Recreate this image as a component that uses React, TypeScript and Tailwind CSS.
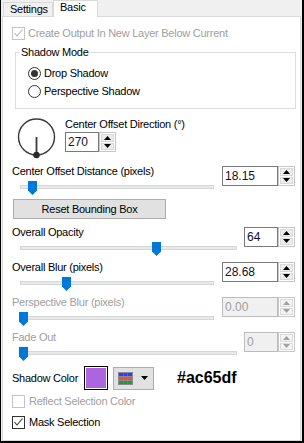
import React from "react";

const T = "text-[11px] leading-[13px] tracking-[-0.25px] whitespace-nowrap";

function Check({ checked, disabled }: { checked?: boolean; disabled?: boolean }) {
  const c = disabled ? "#b5b5b5" : "#333333";
  return (
    <div
      className={`w-[13px] h-[13px] bg-white border shrink-0 ${disabled ? "border-[#c4c4c4]" : "border-[#333333]"}`}
    >
      {checked && (
        <svg width="11" height="11" viewBox="0 0 11 11">
          <polyline points="1.5,5 4,8 9.5,1.5" fill="none" stroke={c} strokeWidth="1.1" />
        </svg>
      )}
    </div>
  );
}

function Radio({ on }: { on?: boolean }) {
  return (
    <div className="w-[13px] h-[13px] rounded-full border border-[#333333] bg-white flex items-center justify-center shrink-0">
      {on && <div className="w-[7px] h-[7px] rounded-full bg-[#333333]" />}
    </div>
  );
}

function Arrow({ up, disabled }: { up?: boolean; disabled?: boolean }) {
  const c = disabled ? "#a0a0a0" : "#000";
  return (
    <svg width="7" height="4" viewBox="0 0 7 4">
      {up ? <polygon points="0,4 7,4 3.5,0" fill={c} /> : <polygon points="0,0 7,0 3.5,4" fill={c} />}
    </svg>
  );
}

function Spin({ value, w, disabled }: { value: string; w: string; disabled?: boolean }) {
  return (
    <div className={`flex h-[20px] ${w} shrink-0`}>
      <div
        className={`flex-1 border flex items-center pl-[2px] text-[12px] leading-[14px] ${
          disabled ? "border-[#bcbcbc] bg-[#f0f0f0] text-[#a0a0a0]" : "border-[#7a7a7a] bg-white text-[#101030]"
        }`}
      >
        {value}
      </div>
      <div className="w-[17px] flex flex-col border border-[#c6c6c6] bg-white p-[1px] gap-[1px]">
        <div className={`flex-1 flex items-center justify-center ${disabled ? "bg-[#f4f4f4]" : "bg-[#ececec]"} border border-[#dadada]`}>
          <Arrow up disabled={disabled} />
        </div>
        <div className={`flex-1 flex items-center justify-center ${disabled ? "bg-[#f4f4f4]" : "bg-[#ececec]"} border border-[#dadada]`}>
          <Arrow disabled={disabled} />
        </div>
      </div>
    </div>
  );
}

function Slider({ w, pos }: { w: string; pos: number }) {
  return (
    <div className={`relative h-[16px] ml-[8px] ${w}`}>
      <div className="absolute left-0 right-0 top-[7px] h-[4px] bg-[#e7eaea] border border-[#d6d6d6]" />
      <svg className="absolute top-[3px]" style={{ left: pos }} width="9" height="14" viewBox="0 0 9 14">
        <path d="M0 0 H9 V9.5 L4.5 14 L0 9.5 Z" fill="#0078d7" />
      </svg>
    </div>
  );
}

function Section({
  label,
  value,
  wide,
  pos,
  disabled,
  h,
}: {
  label: string;
  value: string;
  wide: boolean;
  pos: number;
  disabled?: boolean;
  h: string;
}) {
  return (
    <div className={`flex justify-between items-start ${h}`}>
      <div className="flex flex-col">
        <div className={`${T} ${disabled ? "text-[#a0a0a0]" : "text-black"}`}>{label}</div>
        <Slider w={wide ? "w-[194px]" : "w-[217px]"} pos={pos} />
      </div>
      <div className="mt-[1px]">
        <Spin value={value} w={wide ? "w-[73px]" : "w-[51px]"} disabled={disabled} />
      </div>
    </div>
  );
}

export default function App() {
  return (
    <div className="w-[304px] h-[443px] bg-[#f0f0f0] border-l border-r-2 border-b-2 border-black font-['Liberation_Sans',Arial,sans-serif] text-black overflow-hidden">
      {/* tabs */}
      <div className="flex h-[16px] pl-[2px] items-start relative z-10">
        <div className={`mt-[2px] h-[14px] w-[50px] border-t border-l border-r border-[#d9d9d9] bg-[#f0f0f0] pl-[6px] ${T} leading-[13px]`}>
          Settings
        </div>
        <div className={`h-[17px] w-[45px] border-t border-l border-r border-[#d9d9d9] bg-white pl-[6px] ${T} leading-[13px]`}>
          Basic
        </div>
      </div>
      {/* panel */}
      <div className="ml-[1px] w-[299px] h-[425px] border border-[#d9d9d9] bg-white pl-[9px] pr-[5px] pt-[10px] flex flex-col">
        <div className="flex items-center h-[13px] gap-[3px]">
          <Check checked disabled />
          <span className={`${T} text-[#a0a0a0]`}>Create Output In New Layer Below Current</span>
        </div>

        {/* group box */}
        <div className="relative mt-[12px] ml-[3px] w-[281px] h-[57px] border border-[#dcdcdc] pt-[14px] pl-[12px] flex flex-col gap-[5px]">
          <span className={`absolute left-[3px] top-[-7px] bg-white px-[2px] ${T}`}>Shadow Mode</span>
          <div className="flex items-center h-[13px] gap-[3px]">
            <Radio on />
            <span className={T}>Drop Shadow</span>
          </div>
          <div className="flex items-center h-[13px] gap-[3px]">
            <Radio />
            <span className={T}>Perspective Shadow</span>
          </div>
        </div>

        {/* dial row */}
        <div className="mt-[9px] h-[47px] flex items-start">
          <svg className="ml-[5px] shrink-0" width="40" height="41" viewBox="0 0 40 41">
            <circle cx="19.5" cy="19" r="18" fill="none" stroke="#3a3a3a" strokeWidth="1.4" />
            <line x1="19.5" y1="19" x2="19.5" y2="37" stroke="#3a3a3a" strokeWidth="1.8" />
            <circle cx="19.5" cy="37" r="3.2" fill="#2a2a2a" />
          </svg>
          <div className="ml-[8px] flex flex-col">
            <div className={T}>Center Offset Direction (°)</div>
            <div className="mt-[1px]">
              <Spin value="270" w="w-[51px]" />
            </div>
          </div>
        </div>

        <Section label="Center Offset Distance (pixels)" value="18.15" wide pos={8} h="h-[29px]" />

        <div className="mt-[5px] ml-[1px] w-[153px] h-[20px] bg-[#e1e1e1] border border-[#adadad] flex items-center justify-center">
          <span className={T}>Reset Bounding Box</span>
        </div>

        <div className="mt-[7px] flex flex-col">
          <Section label="Overall Opacity" value="64" wide={false} pos={132} h="h-[35px]" />
          <Section label="Overall Blur (pixels)" value="28.68" wide pos={42} h="h-[35px]" />
          <Section label="Perspective Blur (pixels)" value="0.00" wide pos={-1} disabled h="h-[35px]" />
          <Section label="Fade Out" value="0" wide={false} pos={-1} disabled h="h-[35px]" />
        </div>

        {/* color row */}
        <div className="h-[24px] flex items-center">
          <span className={`${T} w-[72px]`}>Shadow Color</span>
          <div className="w-[24px] h-[24px] border border-black bg-white p-[1px]">
            <div className="w-full h-full bg-[#ac65df]" />
          </div>
          <div className="ml-[5px] w-[41px] h-[23px] bg-[#e1e1e1] border border-[#adadad] flex items-center pl-[4px] gap-[8px]">
            <svg width="15" height="13" viewBox="0 0 15 13">
              <rect x="0" y="0" width="15" height="13" fill="#8a8a8a" />
              <rect x="1" y="1" width="4" height="3" fill="#2b3bff" />
              <rect x="5.5" y="1" width="4" height="3" fill="#2b3bff" />
              <rect x="10" y="1" width="4" height="3" fill="#2b3bff" />
              <rect x="1" y="5" width="4" height="3" fill="#f04848" />
              <rect x="5.5" y="5" width="4" height="3" fill="#f04848" />
              <rect x="10" y="5" width="4" height="3" fill="#f04848" />
              <rect x="1" y="9" width="4" height="3" fill="#1f9a3a" />
              <rect x="5.5" y="9" width="4" height="3" fill="#1f9a3a" />
              <rect x="10" y="9" width="4" height="3" fill="#1f9a3a" />
            </svg>
            <svg width="7" height="4" viewBox="0 0 7 4">
              <polygon points="0,0 7,0 3.5,4" fill="#000" />
            </svg>
          </div>
          <span className="ml-[23px] text-[16px] leading-[18px] font-bold">#ac65df</span>
        </div>

        <div className="mt-[5px] flex items-center h-[13px] gap-[4px]">
          <Check disabled />
          <span className={`${T} text-[#a0a0a0]`}>Reflect Selection Color</span>
        </div>
        <div className="mt-[8px] flex items-center h-[13px] gap-[4px]">
          <Check checked />
          <span className={T}>Mask Selection</span>
        </div>
      </div>
    </div>
  );
}
